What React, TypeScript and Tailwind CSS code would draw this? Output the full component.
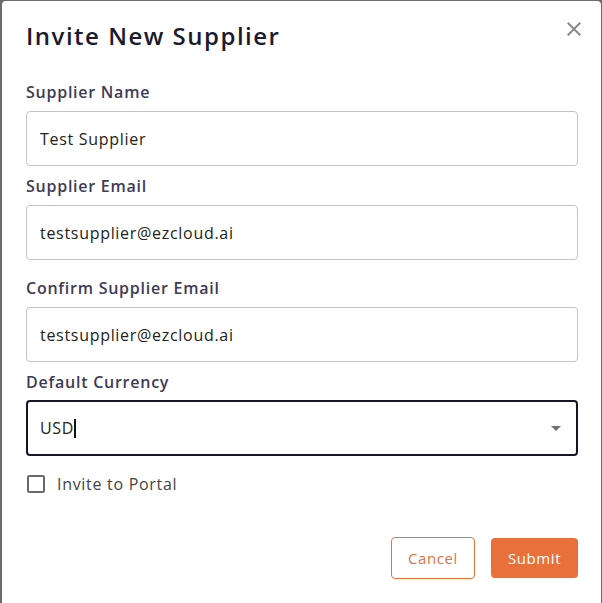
import React from "react";

const font = { fontFamily: "'Open Sans', 'Liberation Sans', sans-serif" };

function Field({ label, value, className = "" }: { label: string; value: string; className?: string }) {
  return (
    <div className={className}>
      <label className="block h-[24px] text-[16px] leading-[24px] font-semibold tracking-[0.75px] text-[#3d3b56]">{label}</label>
      <div className="mt-[7px] flex h-[55px] items-center rounded-[4px] border border-[#c4c4c4] px-[13px] text-[16px] tracking-[0.7px] text-[#222222]">
        {value}
      </div>
    </div>
  );
}

export default function App() {
  return (
    <div className="h-[603px] w-[602px] overflow-hidden bg-[#6b6b6b] pl-[2px] pt-[1px] pr-[1px]" style={font}>
      <div className="relative h-[620px] rounded-t-[4px] bg-white pl-[24px] pr-[23px]">
        {/* close */}
        <button className="absolute right-[15px] top-[16px] text-[#8a8a8a]">
          <svg width="24" height="24" viewBox="0 0 24 24" fill="currentColor">
            <path d="M19 6.41 17.59 5 12 10.59 6.41 5 5 6.41 10.59 12 5 17.59 6.41 19 12 13.41 17.59 19 19 17.59 13.41 12z" />
          </svg>
        </button>

        <h2 className="pt-[19px] text-[24px] leading-[32px] font-semibold tracking-[1.5px] text-[#1b1a2e]">Invite New Supplier</h2>

        <Field className="mt-[28px]" label="Supplier Name" value="Test Supplier" />
        <Field className="mt-[8px]" label="Supplier Email" value="testsupplier@ezcloud.ai" />
        <Field className="mt-[16px]" label="Confirm Supplier Email" value="testsupplier@ezcloud.ai" />

        <div className="mt-[8px]">
          <label className="block h-[24px] text-[16px] leading-[24px] font-semibold tracking-[0.75px] text-[#3d3b56]">Default Currency</label>
          <div className="mt-[6px] flex h-[56px] items-center justify-between rounded-[4px] border-2 border-[#16162a] pl-[12px] pr-[8px] text-[16px] tracking-[0.7px] text-[#222222]">
            <span className="flex items-center">
              USD<span className="inline-block h-[19px] w-[2px] bg-[#111111]" />
            </span>
            <svg width="24" height="24" viewBox="0 0 24 24" fill="#6f6f6f">
              <path d="M7 10l5 5 5-5z" />
            </svg>
          </div>
        </div>

        <label className="mt-[16px] flex items-center gap-[12px] text-[16px] tracking-[0.7px] text-[#444444]">
          <span className="ml-[1px] inline-block h-[18px] w-[18px] rounded-[2px] border-2 border-[#6a6a6a]" />
          Invite to Portal
        </label>

        <div className="mt-[41px] flex justify-end gap-[16px]">
          <button className="h-[42px] w-[84px] rounded-[4px] border border-[#e8723b] text-[15px] tracking-[0.6px] text-[#e8723b]">Cancel</button>
          <button className="mt-[1px] h-[40px] w-[87px] rounded-[4px] bg-[#e8703a] text-[15px] tracking-[0.6px] text-white">Submit</button>
        </div>
      </div>
    </div>
  );
}
